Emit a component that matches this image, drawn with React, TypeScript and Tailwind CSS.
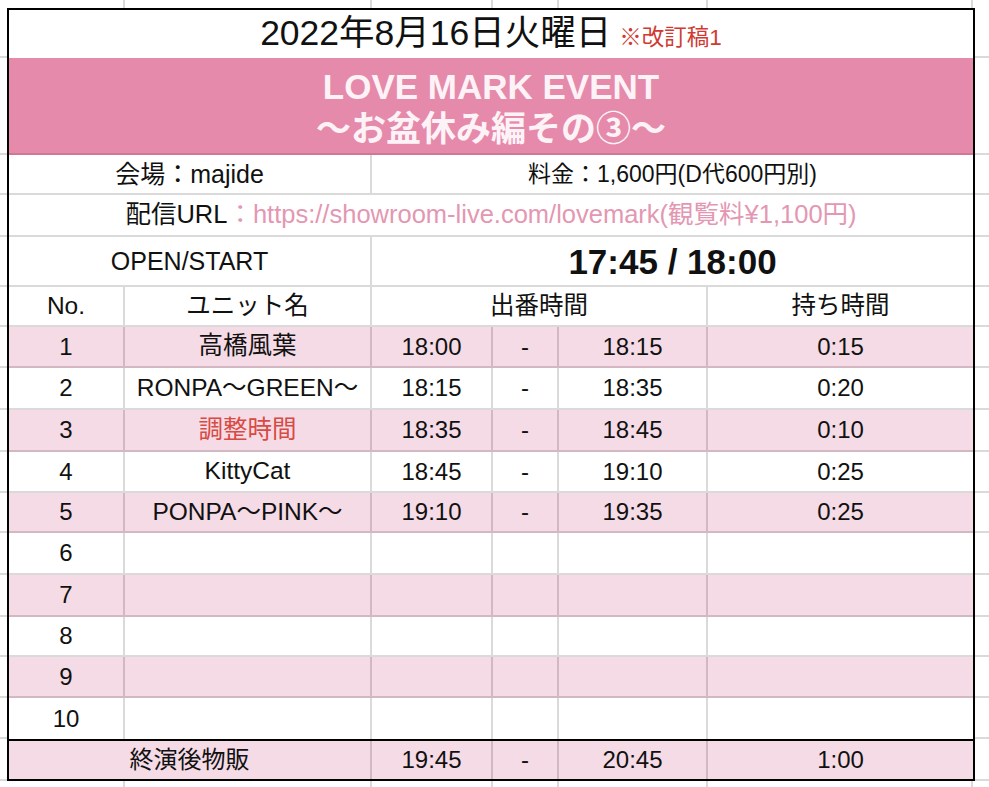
import type { ReactNode } from "react";

const FONT = "font-['Liberation_Sans','Noto_Sans_CJK_JP',sans-serif]";
const GRID = "grid grid-cols-[116px_247px_121px_66px_149px_265px]";

const SPAN: Record<number, string> = {
  1: "col-span-1",
  2: "col-span-2",
  3: "col-span-3",
  4: "col-span-4",
  6: "col-span-6",
};

type Slot = { span?: number; text?: ReactNode; cls?: string };

type Line = {
  no: string;
  name?: string;
  red?: boolean;
  from?: string;
  to?: string;
  dur?: string;
  h: string;
};

const lines: Line[] = [
  { no: "1", name: "高橋風葉", from: "18:00", to: "18:15", dur: "0:15", h: "h-[41px]" },
  { no: "2", name: "RONPA〜GREEN〜", from: "18:15", to: "18:35", dur: "0:20", h: "h-[42px]" },
  { no: "3", name: "調整時間", red: true, from: "18:35", to: "18:45", dur: "0:10", h: "h-[42px]" },
  { no: "4", name: "KittyCat", from: "18:45", to: "19:10", dur: "0:25", h: "h-[41px]" },
  { no: "5", name: "PONPA〜PINK〜", from: "19:10", to: "19:35", dur: "0:25", h: "h-[40px]" },
  { no: "6", h: "h-[42px]" },
  { no: "7", h: "h-[42px]" },
  { no: "8", h: "h-[40px]" },
  { no: "9", h: "h-[41px]" },
  { no: "10", h: "h-[41px]" },
];

// row heights shared by the grey gridline strips left and right of the sheet
const stripRows = [
  "h-[50px]", "h-[97px]", "h-[40px]", "h-[42px]", "h-[50px]", "h-[40px]",
  ...lines.map((l) => l.h),
  "h-[42px]",
];

function Row({
  slots,
  h,
  pink,
  bottom = true,
  extra = "",
}: {
  slots: Slot[];
  h: string;
  pink?: boolean;
  bottom?: boolean;
  extra?: string;
}) {
  const line = pink ? "border-[#d3b7c2]" : "border-[#dadada]";
  return (
    <div className={`${GRID} ${h} grid-rows-1 overflow-hidden ${pink ? "bg-[#f5dbe6]" : "bg-white"} ${extra}`}>
      {slots.map((s, i) => (
        <div
          key={i}
          className={`flex min-h-0 items-center justify-center whitespace-nowrap leading-none ${SPAN[s.span ?? 1]} ${line} ${
            i < slots.length - 1 ? "border-r-2" : ""
          } ${bottom ? "border-b-2" : ""} ${s.cls ?? "text-[24px]"}`}
        >
          {s.text}
        </div>
      ))}
    </div>
  );
}

function Strip({ w }: { w: string }) {
  return (
    <div className={`flex ${w} flex-col`}>
      {stripRows.map((h, i) => (
        <div key={i} className={`${h} border-b-2 border-[#dadada]`} />
      ))}
    </div>
  );
}

function GhostRow({ h }: { h: string }) {
  return (
    <div className={`flex ${h}`}>
      <div className="w-[9px]" />
      <div className={GRID}>
        {[0, 1, 2, 3, 4, 5].map((i) => (
          <div key={i} className="border-r-2 border-[#dadada]" />
        ))}
      </div>
    </div>
  );
}

export default function App() {
  return (
    <div className={`h-[787px] w-[989px] overflow-hidden bg-white text-[#111] ${FONT}`}>
      <GhostRow h="h-[8px]" />
      <div className="flex">
        <Strip w="w-[7px]" />
        <div className="flex flex-col border-2 border-black">
          <div className="flex h-[48px] items-center justify-center">
            <div className="flex items-baseline">
              <span className="text-[35.5px] leading-none">2022年8月16日火曜日</span>
              <span className="ml-[8px] text-[22.5px] leading-none text-[#cf3a32]">※改訂稿1</span>
            </div>
          </div>
          <div className="flex h-[97px] flex-col items-center justify-center border-b-2 border-[#cf7896] bg-[#e58aab] pt-[4px] text-[35px] font-bold leading-[42px] text-[#fdf3f7]">
            <span>LOVE MARK EVENT</span>
            <span>〜お盆休み編その③〜</span>
          </div>
          <Row
            h="h-[40px]"
            slots={[
              { span: 2, text: "会場：majide", cls: "text-[25px]" },
              { span: 4, text: "料金：1,600円(D代600円別)", cls: "text-[23px]" },
            ]}
          />
          <Row
            h="h-[42px]"
            slots={[
              {
                span: 6,
                cls: "text-[25.5px]",
                text: (
                  <>
                    <span>配信URL</span>
                    <span className="text-[#e497b2]">：https://showroom-live.com/lovemark(観覧料¥1,100円)</span>
                  </>
                ),
              },
            ]}
          />
          <Row
            h="h-[50px]"
            slots={[
              { span: 2, text: "OPEN/START", cls: "text-[25px]" },
              { span: 4, text: "17:45 / 18:00", cls: "text-[35px] font-bold" },
            ]}
          />
          <Row
            h="h-[40px]"
            slots={[
              { text: "No.", cls: "text-[24.5px]" },
              { text: "ユニット名", cls: "text-[24.5px]" },
              { span: 3, text: "出番時間", cls: "text-[24.5px]" },
              { text: "持ち時間", cls: "text-[24.5px]" },
            ]}
          />
          {lines.map((l, i) => (
            <Row
              key={l.no}
              h={l.h}
              pink={i % 2 === 0}
              bottom={i < lines.length - 1}
              slots={[
                { text: l.no },
                { text: l.name, cls: l.red ? "text-[24.5px] text-[#d84a43]" : "text-[24.5px]" },
                { text: l.from },
                { text: l.name ? "-" : "" },
                { text: l.to },
                { text: l.dur },
              ]}
            />
          ))}
          <Row
            h="h-[40px]"
            pink
            bottom={false}
            extra="border-t-2 !border-black"
            slots={[
              { span: 2, text: "終演後物販" },
              { text: "19:45" },
              { text: "-" },
              { text: "20:45" },
              { text: "1:00" },
            ]}
          />
        </div>
        <Strip w="w-[14px]" />
      </div>
      <GhostRow h="h-[6px]" />
    </div>
  );
}
